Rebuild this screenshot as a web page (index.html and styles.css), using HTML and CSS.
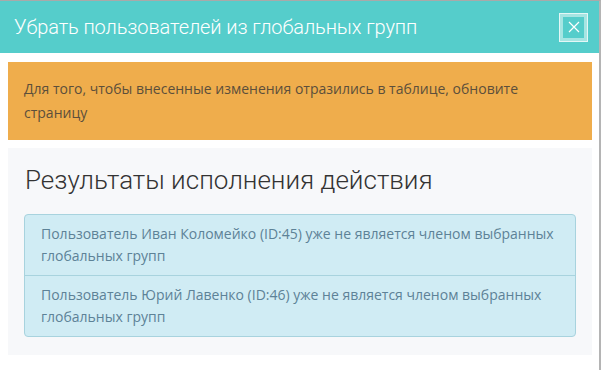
FILE: index.html
```html
<!DOCTYPE html>
<html lang="ru">
<head>
  <meta charset="UTF-8" />
  <title>Убрать пользователей из глобальных групп</title>
  <link rel="stylesheet" href="styles.css">
</head>
<body>

  <div class="modal">
    <!-- Шапка окна -->
    <div class="modal-header">
      <h4 class="modal-title">Убрать пользователей из глобальных групп</h4>
      <button class="close-btn" type="button">
        <svg width="12" height="12" viewBox="0 0 12 12">
          <path d="M1 1 L11 11 M11 1 L1 11" stroke="#fff" stroke-width="1.2" fill="none" />
        </svg>
      </button>
    </div>

    <div class="modal-body">
      <!-- Предупреждение -->
      <div class="alert-warning">
        Для того, чтобы внесенные изменения отразились в таблице, обновите страницу
      </div>

      <!-- Результаты -->
      <div class="results">
        <h3 class="results-title">Результаты исполнения действия</h3>
        <ul class="list-group">
          <li class="list-item">Пользователь Иван Коломейко (ID:45) уже не является членом выбранных глобальных групп</li>
          <li class="list-item">Пользователь Юрий Лавенко (ID:46) уже не является членом выбранных глобальных групп</li>
        </ul>
      </div>
    </div>
  </div>

</body>
</html>
```

FILE: styles.css
```css
/* Общие стили */
body {
  margin: 0;
  background: #fff;
  font-family: "Open Sans", "Liberation Sans", sans-serif;
  font-size: 14px;
}

/* Окно */
.modal {
  width: 599px;
  height: 369px;
  border-top: 1px solid #a9a9a9;
  border-right: 2px solid #b4b4b4;
  background: #fff;
}

.modal-header {
  display: flex;
  align-items: center;
  justify-content: space-between;
  height: 52px;
  padding: 0 11px 0 14px;
  background: #55cdcb;
}

.modal-title {
  margin: 0;
  font-family: Roboto, "Open Sans", sans-serif;
  font-size: 20px;
  font-weight: 300;
  letter-spacing: -0.1px;
  color: #fff;
}

/* Кнопка закрытия */
.close-btn {
  display: flex;
  align-items: center;
  justify-content: center;
  width: 29px;
  height: 29px;
  padding: 0;
  border: 1px solid #e4f7f6;
  box-shadow: inset 0 0 0 3px #a6e5e3;
  background: #55cdcb;
  cursor: pointer;
}

.modal-body {
  padding: 9px 7px 0 8px;
}

/* Оранжевое предупреждение */
.alert-warning {
  padding: 15px 16px;
  line-height: 24px;
  background: #efad4c;
  color: #5c4f3b;
}

/* Блок результатов */
.results {
  margin-top: 8px;
  padding: 15px 16px 18px;
  background: #f7f8fa;
}

.results-title {
  margin: 0 0 17px 1px;
  font-family: Roboto, "Open Sans", sans-serif;
  font-size: 26px;
  font-weight: 300;
  line-height: 34px;
  color: #333;
}

.list-group {
  margin: 0;
  padding: 0;
  list-style: none;
  border: 1px solid #a8d3de;
  border-radius: 4px;
  background: #d0ecf4;
}

.list-item {
  padding: 8px 16px;
  line-height: 22px;
  color: #5d8297;
}

.list-item + .list-item {
  border-top: 1px solid #a8d3de;
}
```
